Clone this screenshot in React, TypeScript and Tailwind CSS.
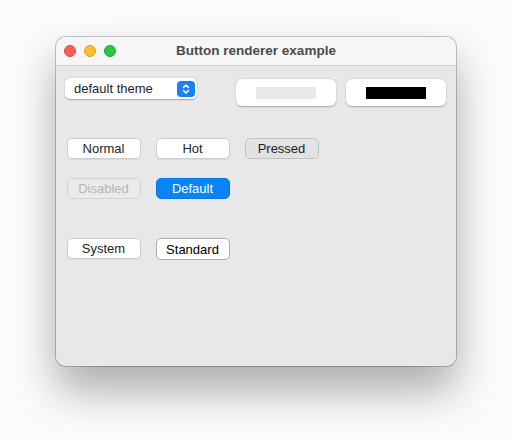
import React from "react";

const font = { fontFamily: '"Liberation Sans", Arial, sans-serif' };

const base =
  "w-[74px] h-[21px] rounded-[5px] flex items-center justify-center text-[13px] leading-none";

function PushButton({ label, kind }: { label: string; kind: string }) {
  const styles: Record<string, string> = {
    normal: "bg-white border border-[#cdcdcd] text-[#1e1e1e] shadow-[0_1px_0_rgba(0,0,0,0.06)]",
    pressed: "bg-[#e2e2e2] border border-[#c2c2c2] text-[#1e1e1e]",
    disabled: "bg-[#ebebeb] border border-[#d3d3d3] text-[#b5b5b5]",
    default: "bg-[#0a84fb] border border-[#0a76e4] text-white",
    standard: "h-[22px] rounded-[4px] bg-white border border-[#aeaeae] text-black",
  };
  return <div className={`${base} ${styles[kind]}`}>{label}</div>;
}

export default function App() {
  return (
    <div className="w-[512px] h-[440px] bg-[#fbfbfb] pl-[56px] pt-[37px]" style={font}>
      <div className="w-[400px] h-[329px] rounded-[10px] overflow-hidden flex flex-col shadow-[0_24px_44px_rgba(0,0,0,0.32),0_0_0_1px_rgba(0,0,0,0.22)]">
        {/* title bar */}
        <div className="h-[29px] bg-[#f6f6f6] border-b border-[#d2d2d2] grid grid-cols-[64px_1fr_64px] items-center">
          <div className="flex items-center gap-[8px] pl-[8px]">
            <span className="w-[12px] h-[12px] rounded-full bg-[#fe5f57] border border-[#e2463f]" />
            <span className="w-[12px] h-[12px] rounded-full bg-[#febc2e] border border-[#e1a116]" />
            <span className="w-[12px] h-[12px] rounded-full bg-[#28c840] border border-[#1aab29]" />
          </div>
          <div className="text-center text-[13.5px] font-bold text-[#4b4b4b] leading-none">
            Button renderer example
          </div>
          <div />
        </div>

        {/* content */}
        <div className="flex-1 bg-[#e8e8e8] flex flex-col">
          <div className="mt-[12px] h-[28px] flex items-start pl-[9px] pr-[10px]">
            <div className="w-[132px] h-[21px] bg-white rounded-[5px] shadow-[0_0.5px_1.5px_rgba(0,0,0,0.3)] flex items-center pl-[9px] pr-[2px]">
              <span className="text-[13px] text-[#1e1e1e] leading-none flex-1">default theme</span>
              <span className="w-[18px] h-[16px] rounded-[4px] bg-[#1c7ff6] flex items-center justify-center">
                <svg width="8" height="12" viewBox="0 0 8 12" fill="none" stroke="white" strokeWidth="1.5" strokeLinecap="round" strokeLinejoin="round">
                  <path d="M1.5 4.5 L4 2 L6.5 4.5" />
                  <path d="M1.5 7.5 L4 10 L6.5 7.5" />
                </svg>
              </span>
            </div>
            <div className="ml-auto mt-[1px] flex gap-[10px]">
              <div className="w-[100px] h-[27px] bg-white rounded-[6px] shadow-[0_0.5px_1.5px_rgba(0,0,0,0.3)] flex items-center justify-center">
                <div className="w-[60px] h-[12px] bg-[#e8e8e8]" />
              </div>
              <div className="w-[100px] h-[27px] bg-white rounded-[6px] shadow-[0_0.5px_1.5px_rgba(0,0,0,0.3)] flex items-center justify-center">
                <div className="w-[60px] h-[12px] bg-black" />
              </div>
            </div>
          </div>

          <div className="mt-[32px] flex gap-[15px] pl-[10.5px]">
            <PushButton label="Normal" kind="normal" />
            <PushButton label="Hot" kind="normal" />
            <PushButton label="Pressed" kind="pressed" />
          </div>

          <div className="mt-[19px] flex gap-[15px] pl-[10.5px]">
            <PushButton label="Disabled" kind="disabled" />
            <PushButton label="Default" kind="default" />
          </div>

          <div className="mt-[39px] flex gap-[15px] pl-[10.5px] items-start">
            <PushButton label="System" kind="normal" />
            <PushButton label="Standard" kind="standard" />
          </div>
        </div>
      </div>
    </div>
  );
}
